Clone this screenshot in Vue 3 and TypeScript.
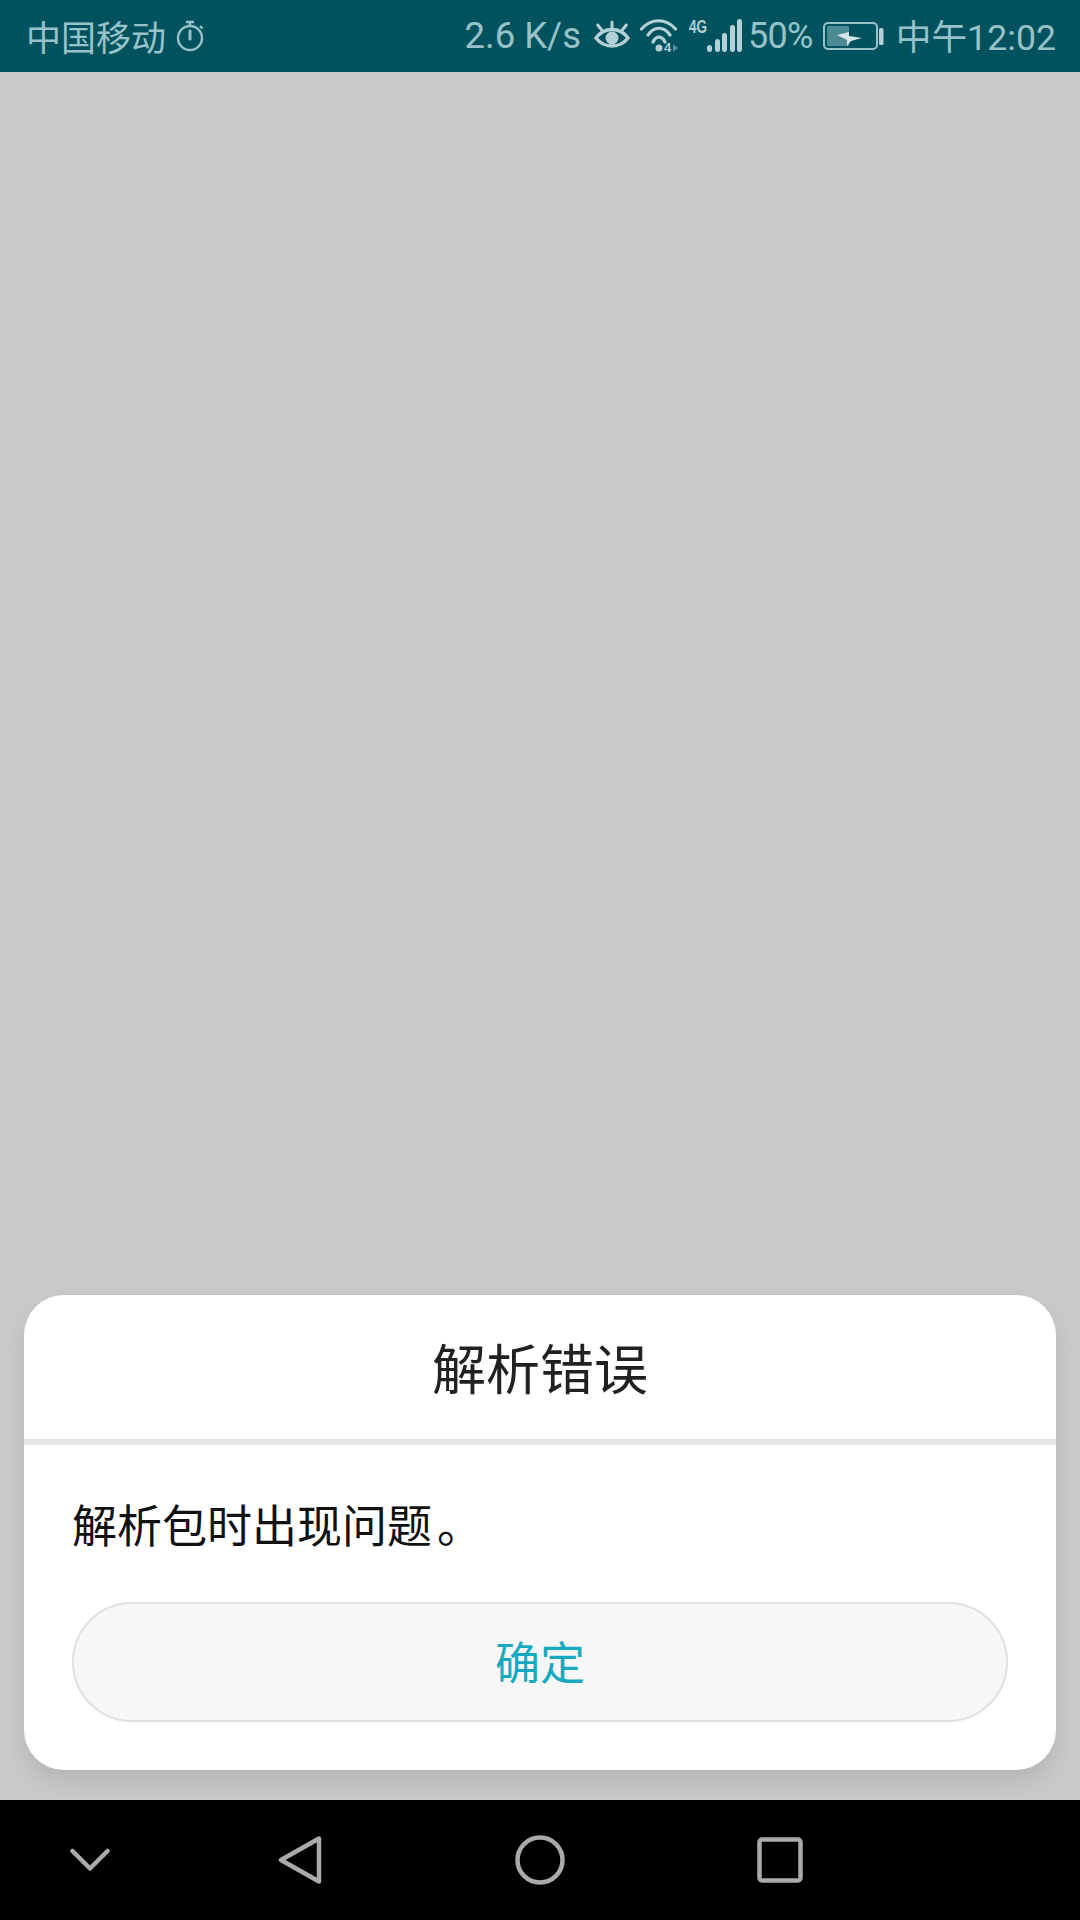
<script setup lang="ts">
const bars: number[][] = [
  [18, 26, 5, 7],
  [26, 20, 5, 13],
  [33, 14, 5, 19],
  [41, 6, 5, 27],
  [48, 0, 5, 33],
];
</script>

<template>
  <div class="screen">
    <header class="status">
      <div class="status-left">
        <span class="carrier">中国移动</span>
        <svg class="timer" width="30" height="34" viewBox="0 0 30 34">
          <circle cx="15" cy="19" r="12" fill="none" stroke="currentColor" stroke-width="2.4" />
          <path d="M11 3h8M15 3v4M25 7l2.5 2.5" fill="none" stroke="currentColor" stroke-width="2.4" />
          <path d="M15 12v8" fill="none" stroke="currentColor" stroke-width="3" stroke-linecap="round" />
        </svg>
      </div>
      <div class="status-right">
        <span class="speed">2.6 K/s</span>
        <svg class="eye" width="38" height="32" viewBox="0 0 38 32">
          <path d="M3 20C8 13 13 11.500 19 11.500S30 13 35 20C30 26.500 25 28 19 28S8 26.500 3 20Z" fill="none" stroke="currentColor" stroke-width="3.400" />
          <circle cx="19" cy="20" r="6.500" fill="currentColor" />
          <path d="M19 4v7M4.700 7l4 5M33.300 7l-4 5" fill="none" stroke="currentColor" stroke-width="3" stroke-linecap="round" />
        </svg>
        <svg class="wifi" width="42" height="36" viewBox="0 0 42 36">
          <path d="M1.500 11C11 0 26 0 35.500 11M8 17C14 8 24 8 30 17M13 24C16 17.500 22 17.500 25 24" fill="none" stroke="currentColor" stroke-width="3.200" stroke-linecap="round" />
          <circle cx="19" cy="30" r="3.500" fill="currentColor" />
          <text x="24" y="34" class="wifi-four">4</text>
          <path d="M33 26l5 4-5 4Z" fill="currentColor" opacity=".45" />
        </svg>
        <svg class="signal" width="53" height="37" viewBox="0 -4 53 37">
          <text x="0" y="14" class="tag" textLength="18" lengthAdjust="spacingAndGlyphs">4G</text>
          <rect v-for="(b, i) in bars" :key="i" :x="b[0]" :y="b[1]" :width="b[2]" :height="b[3]" rx="2.500" fill="currentColor" />
        </svg>
        <span class="percent">50%</span>
        <svg class="battery" width="62" height="30" viewBox="0 0 62 30">
          <rect x="2" y="2" width="53" height="26" rx="4" fill="none" stroke="currentColor" stroke-width="2" />
          <rect x="5" y="5" width="22" height="20" rx="1" fill="currentColor" opacity=".5" />
          <path d="M15 14L27 11V15L40 17L29 20L25 25V19Z" fill="#d6e4e6" />
          <rect x="57" y="7" width="4.500" height="17" rx="1.500" fill="#b4d0d4" />
        </svg>
        <span class="clock">中午12:02</span>
      </div>
    </header>

    <main class="stage">
      <section class="dialog">
        <h1 class="title">解析错误</h1>
        <div class="content">
          <p class="message">解析包时出现问题<span class="stop">。</span></p>
          <button class="confirm" type="button">确定</button>
        </div>
      </section>
    </main>

    <nav class="nav">
      <div class="slot">
        <svg width="40" height="24" viewBox="0 0 40 24">
          <path d="M2.500 3L20 20.500 37.500 3" fill="none" stroke="#aaaaaa" stroke-width="4.500" stroke-linecap="round" stroke-linejoin="round" />
        </svg>
      </div>
      <div class="slot">
        <svg width="44" height="50" viewBox="0 0 44 50">
          <path d="M41 3.500V46.500L3 25Z" fill="none" stroke="#aaaaaa" stroke-width="4.500" stroke-linejoin="round" />
        </svg>
      </div>
      <div class="slot">
        <svg width="50" height="50" viewBox="0 0 50 50">
          <circle cx="25" cy="25" r="22.500" fill="none" stroke="#aaaaaa" stroke-width="4.500" />
        </svg>
      </div>
      <div class="slot">
        <svg width="46" height="46" viewBox="0 0 46 46">
          <rect x="2.500" y="2.500" width="41" height="41" rx="2.500" fill="none" stroke="#aaaaaa" stroke-width="4.500" />
        </svg>
      </div>
    </nav>
  </div>
</template>

<style scoped>
.screen {
  width: 1080px;
  height: 1920px;
  display: flex;
  flex-direction: column;
  background: #cacaca;
  font-family: "Noto Sans CJK SC", "Noto Sans", sans-serif;
  overflow: hidden;
}

.status {
  height: 72px;
  flex: none;
  display: flex;
  align-items: center;
  justify-content: space-between;
  padding: 0 24px 0 26px;
  background: #00535e;
  color: #98c2c8;
  font-family: Roboto, "Noto Sans CJK SC", sans-serif;
  font-size: 36px;
  white-space: nowrap;
}

.status-left,
.status-right {
  display: flex;
  align-items: center;
}

.status-left {
  gap: 9px;
}

.carrier {
  font-family: "Noto Sans CJK SC", sans-serif;
  font-size: 35px;
  font-weight: 400;
  line-height: 40px;
}

.timer {
  margin-top: -1px;
}

.speed {
  font-size: 36.5px;
  line-height: 40px;
}

.eye {
  margin-left: 12px;
  margin-top: -4px;
  color: #b4d0d4;
}

.wifi {
  margin-left: 9px;
  color: #b4d0d4;
}

.wifi-four {
  font-family: "Liberation Sans", sans-serif;
  font-size: 13px;
  font-weight: 700;
  fill: currentColor;
}

.signal {
  margin-left: 7px;
  margin-top: -5px;
  color: #b4d0d4;
}

.tag {
  font-family: "Liberation Sans", sans-serif;
  font-size: 19px;
  font-weight: 700;
  fill: currentColor;
}

.percent {
  margin-left: 6px;
  font-size: 36px;
  letter-spacing: -0.7px;
  line-height: 40px;
}

.battery {
  margin-left: 9px;
}

.clock {
  margin-left: 12px;
  margin-top: 3px;
  font-size: 35.7px;
  line-height: 40px;
}

.stage {
  flex: 1;
  display: flex;
  flex-direction: column;
  justify-content: flex-end;
  padding: 0 24px 30px;
}

.dialog {
  background: #ffffff;
  border-radius: 40px;
  box-shadow: 0 12px 24px rgba(0, 0, 0, 0.1);
}

.title {
  margin: 0;
  height: 144px;
  display: flex;
  align-items: center;
  justify-content: center;
  border-bottom: 6px solid #e5e5e5;
  color: #212121;
  font-size: 54px;
  font-weight: 400;
  line-height: 1;
}

.content {
  padding: 0 48px 48px;
}

.message {
  margin: 0;
  height: 157px;
  display: flex;
  align-items: center;
  color: #111111;
  font-size: 45px;
  font-weight: 400;
  line-height: 1;
}

.stop {
  margin-left: 5px;
}

.confirm {
  display: flex;
  align-items: center;
  justify-content: center;
  width: 100%;
  height: 120px;
  padding: 0 0 3px;
  border: 2px solid #e0e0e0;
  border-radius: 60px;
  background: #f7f7f7;
  color: #17a9c0;
  font-family: inherit;
  font-size: 45px;
  line-height: 1;
}

.nav {
  height: 120px;
  flex: none;
  display: grid;
  grid-template-columns: 180px 240px 240px 240px;
  background: #000000;
}

.slot {
  display: flex;
  align-items: center;
  justify-content: center;
  height: 100%;
}
</style>
